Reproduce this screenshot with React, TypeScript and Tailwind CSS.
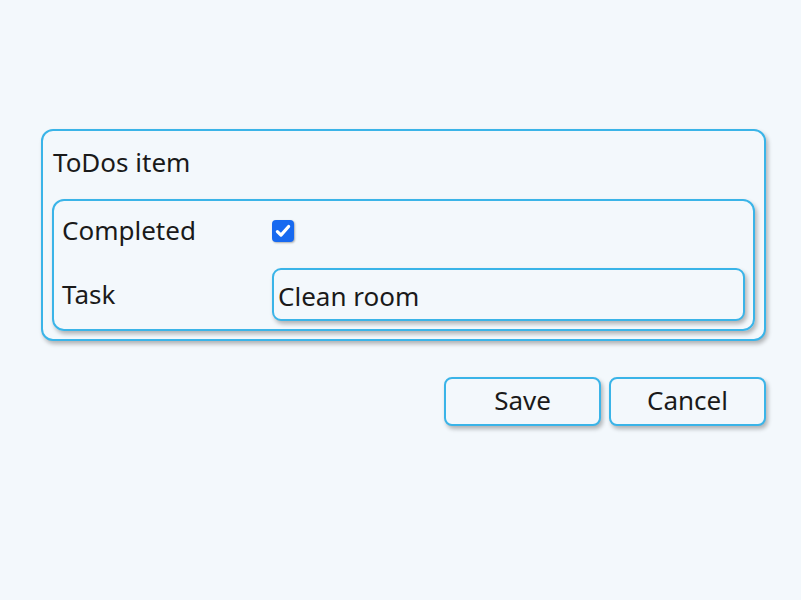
import React, { useState } from 'react';

const font = { fontFamily: '"Noto Sans", "Open Sans", sans-serif' };

const App: React.FC = () => {
  const [completed, setCompleted] = useState(true);
  const [task, setTask] = useState('Clean room');

  return (
    <div className="min-h-[600px] w-full bg-[#f3f8fc] text-[#1a1a1a]" style={font}>
      <div className="ml-[41px] w-[725px] pt-[129px]">
        {/* form card */}
        <div className="rounded-[12px] border-2 border-[#3ab4e8] bg-[#f3f8fc] px-[9px] pb-[8px] shadow-[2px_3px_4px_rgba(0,0,0,0.28)]">
          <div className="flex h-[68px] items-center pl-[1px] pb-[6px] text-[26px] leading-none">ToDos item</div>
          <div className="rounded-[12px] border-2 border-[#3ab4e8] px-[8px] pb-[8px] pt-[10px] shadow-[2px_3px_4px_rgba(0,0,0,0.28)]">
            <div className="flex h-[40px] items-center">
              <div className="w-[210px] pb-[2px] text-[26px] leading-none">Completed</div>
              <button
                type="button"
                onClick={() => setCompleted(c => !c)}
                className={`flex h-[22px] w-[22px] items-center justify-center rounded-[4px] shadow-[1px_1px_2px_rgba(0,0,0,0.3)] ${completed ? 'bg-[#1769f0]' : 'bg-white border border-gray-400'}`}
                aria-label="Completed"
              >
                {completed && (
                  <svg viewBox="0 0 16 16" className="h-[18px] w-[18px]" fill="none" stroke="white" strokeWidth={2.8} strokeLinecap="round" strokeLinejoin="round">
                    <path d="M3 8.5l3.2 3.2L13 4" />
                  </svg>
                )}
              </button>
            </div>
            <div className="mt-[17px] flex items-center">
              <div className="w-[210px] pb-[2px] text-[26px] leading-none">Task</div>
              <input
                value={task}
                onChange={e => setTask(e.target.value)}
                className="h-[53px] flex-1 rounded-[9px] border-2 border-[#3ab4e8] bg-[#f3f8fc] px-[4px] pt-[2px] text-[26px] outline-none shadow-[2px_3px_4px_rgba(0,0,0,0.28)]"
              />
            </div>
          </div>
        </div>

        <div className="mt-[36px] flex justify-end gap-[8px]">
          <button className="h-[49px] w-[157px] rounded-[8px] border-2 border-[#3ab4e8] bg-[#f3f8fc] pb-[2px] text-[26px] shadow-[2px_3px_4px_rgba(0,0,0,0.28)]">
            Save
          </button>
          <button className="h-[49px] w-[157px] rounded-[8px] border-2 border-[#3ab4e8] bg-[#f3f8fc] pb-[2px] text-[26px] shadow-[2px_3px_4px_rgba(0,0,0,0.28)]">
            Cancel
          </button>
        </div>
      </div>
    </div>
  );
};

export default App;
